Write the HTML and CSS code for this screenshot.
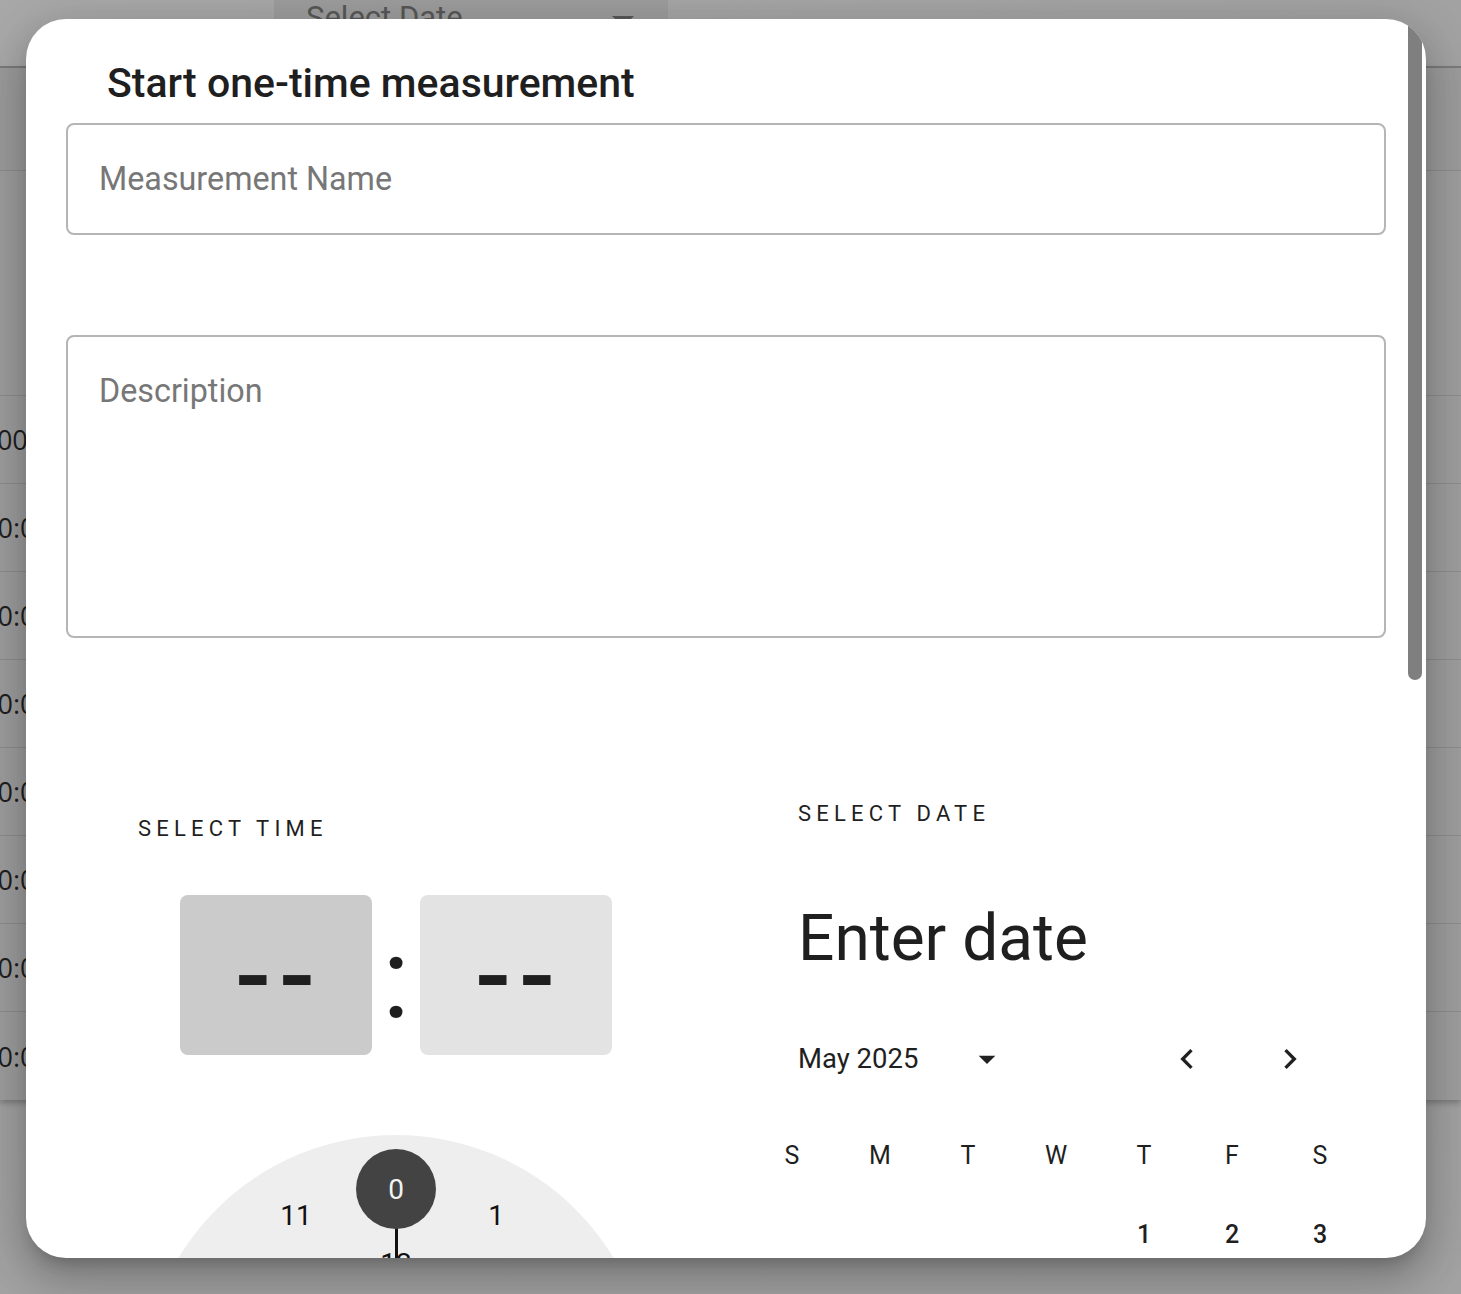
FILE: index.html
```html
<!DOCTYPE html>
<html lang="en">
<head>
<meta charset="utf-8">
<title>Start one-time measurement</title>
<link rel="stylesheet" href="styles.css">
</head>
<body>
<div class="page">
  <div class="topbar">
    <div class="select-box">
      <span class="select-text">Select Date</span>
      <span class="select-arrow"></span>
    </div>
  </div>
  <div class="table-card">
    <div class="thead"></div>
    <div class="row row-tall"></div>
    <div class="row"><span class="cell cell-a">1000</span></div>
    <div class="row"><span class="cell">10:00</span></div>
    <div class="row"><span class="cell">10:00</span></div>
    <div class="row"><span class="cell">10:00</span></div>
    <div class="row"><span class="cell">10:00</span></div>
    <div class="row"><span class="cell">10:00</span></div>
    <div class="row"><span class="cell">10:00</span></div>
    <div class="row row-last"><span class="cell">10:00</span></div>
  </div>
</div>

<div class="dialog">
  <div class="dialog-content">
    <h2 class="dialog-title">Start one-time measurement</h2>
    <div class="field field-name"><span class="placeholder">Measurement Name</span></div>
    <div class="field field-desc"><span class="placeholder">Description</span></div>

    <div class="pickers">
      <div class="picker picker-time">
        <div class="overline overline-time">SELECT TIME</div>
        <div class="time-display">
          <div class="time-box time-box-active">--</div>
          <div class="time-sep">:</div>
          <div class="time-box">--</div>
        </div>
        <div class="clock">
          <div class="clock-hand"></div>
          <div class="clock-pin"></div>
          <span class="num num-selected" style="left:254px;top:54px">0</span>
          <span class="num" style="left:354px;top:80.8px">1</span>
          <span class="num" style="left:427.2px;top:154px">2</span>
          <span class="num" style="left:454px;top:254px">3</span>
          <span class="num" style="left:427.2px;top:354px">4</span>
          <span class="num" style="left:354px;top:427.2px">5</span>
          <span class="num" style="left:254px;top:454px">6</span>
          <span class="num" style="left:154px;top:427.2px">7</span>
          <span class="num" style="left:80.8px;top:354px">8</span>
          <span class="num" style="left:54px;top:254px">9</span>
          <span class="num" style="left:80.8px;top:154px">10</span>
          <span class="num" style="left:154px;top:80.8px">11</span>
          <span class="num num-inner" style="left:254px;top:128px">12</span>
          <span class="num num-inner" style="left:318px;top:143.1px">13</span>
          <span class="num num-inner" style="left:364.9px;top:190px">14</span>
          <span class="num num-inner" style="left:382px;top:254px">15</span>
          <span class="num num-inner" style="left:364.9px;top:318px">16</span>
          <span class="num num-inner" style="left:318px;top:364.9px">17</span>
          <span class="num num-inner" style="left:254px;top:382px">18</span>
          <span class="num num-inner" style="left:190px;top:364.9px">19</span>
          <span class="num num-inner" style="left:143.1px;top:318px">20</span>
          <span class="num num-inner" style="left:126px;top:254px">21</span>
          <span class="num num-inner" style="left:143.1px;top:190px">22</span>
          <span class="num num-inner" style="left:190px;top:143.1px">23</span>
        </div>
      </div>

      <div class="picker picker-date">
        <div class="overline overline-date">SELECT DATE</div>
        <div class="date-title">Enter date</div>
        <div class="month-row">
          <span class="month-label">May 2025</span>
          <button class="icon-btn month-switch" aria-label="choose year">
            <svg width="40" height="40" viewBox="0 0 24 24"><path d="M7 10l5 5 5-5z" fill="#212121"/></svg>
          </button>
          <span class="spacer"></span>
          <button class="icon-btn nav-btn" aria-label="previous month">
            <svg width="40" height="40" viewBox="0 0 24 24"><path d="M15.41 7.41 14 6l-6 6 6 6 1.41-1.41L10.83 12z" fill="#212121"/></svg>
          </button>
          <button class="icon-btn nav-btn" aria-label="next month">
            <svg width="40" height="40" viewBox="0 0 24 24"><path d="M10 6 8.59 7.41 13.17 12l-4.58 4.59L10 18l6-6z" fill="#212121"/></svg>
          </button>
        </div>
        <div class="cal-grid">
          <span class="wd">S</span><span class="wd">M</span><span class="wd">T</span><span class="wd">W</span><span class="wd">T</span><span class="wd">F</span><span class="wd">S</span>
          <span class="day empty"></span><span class="day empty"></span><span class="day empty"></span><span class="day empty"></span>
          <span class="day">1</span><span class="day">2</span><span class="day">3</span>
          <span class="day">4</span><span class="day">5</span><span class="day">6</span><span class="day">7</span><span class="day">8</span><span class="day">9</span><span class="day">10</span>
        </div>
      </div>
    </div>
  </div>
  <div class="scroll-thumb"></div>
</div>
</body>
</html>
```

FILE: styles.css
```css
* { box-sizing: border-box; }

html, body {
  margin: 0;
  padding: 0;
}

body {
  width: 1461px;
  height: 1294px;
  overflow: hidden;
  position: relative;
  background: linear-gradient(180deg, #9a9a9a 0%, #a2a2a2 100%);
  font-family: Roboto, "Noto Sans", Arial, sans-serif;
  color: #212121;
}

/* ---------- background page (dimmed) ---------- */
.page {
  display: flex;
  flex-direction: column;
}

.topbar {
  height: 68px;
  background: linear-gradient(90deg, #a8a8a8 0%, #a2a2a2 100%);
  border-bottom: 2px solid #7d7d7d;
  padding-left: 274px;
}

.select-box {
  width: 394px;
  height: 66px;
  background: #9c9c9c;
  display: flex;
  align-items: flex-start;
  padding: 0 0 0 32px;
  position: relative;
}

.select-text {
  font-size: 31px;
  line-height: 40px;
  margin-top: -2px;
  color: #575757;
}

.select-arrow {
  position: absolute;
  left: 338px;
  top: 16px;
  width: 0;
  height: 0;
  border-left: 11px solid transparent;
  border-right: 11px solid transparent;
  border-top: 11px solid #575757;
}

.table-card {
  background: #9d9d9d;
  box-shadow: 0 3px 6px rgba(0, 0, 0, 0.25);
}

.thead {
  height: 103px;
  background: #9b9b9b;
  border-bottom: 1px solid #8c8c8c;
}

.row {
  height: 88px;
  border-bottom: 1px solid #8c8c8c;
  display: flex;
  align-items: center;
  overflow: hidden;
  font-family: "Open Sans", "DejaVu Sans", sans-serif;
  font-size: 27px;
  color: #1e1e1e;
}

.row-tall { height: 225px; }
.row-last { border-bottom: 0; }

.cell { margin-left: -18px; white-space: nowrap; }
.cell-a { margin-left: -34px; }

/* ---------- dialog ---------- */
.dialog {
  position: absolute;
  left: 26px;
  top: 19px;
  width: 1400px;
  height: 1239px;
  background: #fff;
  border-radius: 40px;
  overflow: hidden;
  box-shadow: 0 11px 15px -7px rgba(0, 0, 0, 0.2),
              0 24px 38px 3px rgba(0, 0, 0, 0.14),
              0 9px 46px 8px rgba(0, 0, 0, 0.12);
}

.dialog-content {
  height: 100%;
  overflow: hidden;
  padding: 0 40px;
}

.dialog-title {
  margin: 0;
  padding: 40px 0 0 41px;
  font-size: 41px;
  line-height: 48px;
  font-weight: 500;
  color: #1f1f1f;
}

.field {
  border: 2px solid #b5b5b5;
  border-radius: 8px;
  padding-left: 31px;
}

.field-name {
  margin-top: 16px;
  height: 112px;
  display: flex;
  align-items: center;
}

.field-desc {
  margin-top: 100px;
  height: 303px;
  padding-top: 36px;
}

.placeholder {
  font-size: 32.3px;
  line-height: 36px;
  color: #777;
}

/* ---------- pickers ---------- */
.pickers {
  display: flex;
  margin-top: 142px;
}

.picker {
  width: 660px;
  flex: none;
  display: flex;
  flex-direction: column;
}

.overline {
  font-size: 22px;
  line-height: 32px;
  letter-spacing: 5.2px;
  color: #1f1f1f;
  padding-left: 72px;
}

.overline-time { margin-top: 33px; }
.overline-date { margin-top: 18px; }

.time-display {
  margin-top: 50px;
  display: flex;
  justify-content: center;
  align-items: center;
}

.time-box {
  width: 192px;
  height: 160px;
  border-radius: 8px;
  background: #e3e3e3;
  display: flex;
  align-items: center;
  justify-content: center;
  font-size: 106px;
  font-weight: 500;
  letter-spacing: 8px;
  padding-left: 6px;
  color: #1f1f1f;
  line-height: 1;
  padding-top: 2px;
}

.time-box-active { background: #cbcbcb; }

.time-sep {
  width: 48px;
  height: 160px;
  display: flex;
  align-items: center;
  justify-content: center;
  font-size: 114px;
  line-height: 1;
  color: #1f1f1f;
  padding-top: 6px;
}

.clock {
  margin: 80px auto 0;
  width: 508px;
  height: 508px;
  border-radius: 50%;
  background: #eeeeee;
  position: relative;
  flex: none;
}

.clock-hand {
  position: absolute;
  left: 252.5px;
  top: 90px;
  width: 3px;
  height: 164px;
  background: #111;
}

.clock-pin {
  position: absolute;
  left: 250px;
  top: 250px;
  width: 8px;
  height: 8px;
  border-radius: 50%;
  background: #111;
}

.num {
  position: absolute;
  width: 48px;
  height: 48px;
  margin: -24px 0 0 -24px;
  display: flex;
  align-items: center;
  justify-content: center;
  font-size: 28px;
  color: #111;
}

.num-selected {
  width: 80px;
  height: 80px;
  margin: -40px 0 0 -40px;
  border-radius: 50%;
  background: #434343;
  color: #f2f2f2;
}

.date-title {
  margin-top: 71px;
  padding-left: 72px;
  font-size: 64px;
  line-height: 76px;
  color: #1f1f1f;
}

.month-row {
  margin-top: 58px;
  height: 48px;
  display: flex;
  align-items: center;
  padding-left: 72px;
  padding-right: 72px;
}

.month-label {
  font-size: 27.5px;
  line-height: 48px;
  color: #1f1f1f;
}

.icon-btn {
  border: 0;
  background: transparent;
  padding: 0;
  width: 48px;
  height: 48px;
  display: flex;
  align-items: center;
  justify-content: center;
}

.month-switch { margin-left: 45px; }

.spacer { flex: 1; }

.nav-btn + .nav-btn { margin-left: 55px; }

.cal-grid {
  margin: 48px auto 0;
  width: 616px;
  display: grid;
  grid-template-columns: repeat(7, 88px);
  grid-auto-rows: 48px;
  row-gap: 31px;
}

.wd, .day {
  display: flex;
  align-items: center;
  justify-content: center;
  font-size: 25px;
  color: #1f1f1f;
}

.day { font-weight: 500; }

.scroll-thumb {
  position: absolute;
  right: 4px;
  top: 0;
  width: 14px;
  height: 661px;
  border-radius: 7px;
  background: #7f7f7f;
}
```
